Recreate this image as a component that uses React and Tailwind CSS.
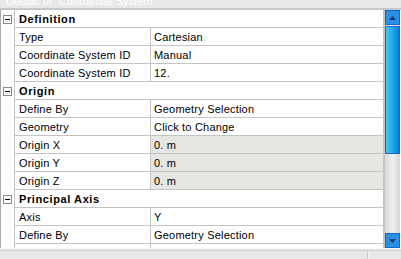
const font = { fontFamily: '"Liberation Sans", Arial, sans-serif' };

const sections = [
  {
    title: "Definition",
    rows: [
      ["Type", "Cartesian"],
      ["Coordinate System ID", "Manual"],
      ["Coordinate System ID", "12."],
    ],
  },
  {
    title: "Origin",
    rows: [
      ["Define By", "Geometry Selection"],
      ["Geometry", "Click to Change"],
      ["Origin X", "0. m", true],
      ["Origin Y", "0. m", true],
      ["Origin Z", "0. m", true],
    ],
  },
  {
    title: "Principal Axis",
    rows: [
      ["Axis", "Y"],
      ["Define By", "Geometry Selection"],
      ["", ""],
    ],
  },
];

const MinusBox = () => (
  <div className="w-[9px] h-[9px] border border-[#8a8a8a] bg-white flex items-center justify-center">
    <div className="w-[5px] h-px bg-black" />
  </div>
);

const HeaderRow = ({ title }) => (
  <div className="flex h-[18px] shrink-0">
    <div className="w-[13px] shrink-0 flex items-center justify-center bg-white">
      <MinusBox />
    </div>
    <div className="flex-1 border-l border-b border-[#c4c4c4] bg-white flex items-center pl-[4px] pt-px text-[11px] font-bold tracking-[0.6px] text-black">
      {title}
    </div>
  </div>
);

const DataRow = ({ label, value, readOnly }) => (
  <div className="flex h-[18px] shrink-0">
    <div className="w-[13px] shrink-0 bg-white" />
    <div className="w-[136px] shrink-0 border-l border-b border-[#c4c4c4] bg-white flex items-center pl-[4px] pt-px text-[11px] tracking-[0.2px] text-black">
      {label}
    </div>
    <div
      className={`flex-1 border-l border-b border-[#c4c4c4] flex items-center pl-[3px] pt-px text-[11px] tracking-[0.2px] text-black ${
        readOnly ? "bg-[#e8e6e2]" : "bg-white"
      }`}
    >
      {value}
    </div>
  </div>
);

const Scrollbar = () => (
  <div className="w-[16px] shrink-0 flex flex-col bg-gradient-to-r from-[#d6d6d6] via-[#efefef] to-[#d6d6d6] border-l border-[#c4c4c4]">
    <div className="h-[15px] shrink-0 bg-[#2b8fe6] border border-[#1467c8] flex items-center justify-center">
      <svg width="7" height="4" viewBox="0 0 7 4">
        <path d="M0 4 L3.5 0 L7 4 Z" fill="#17406e" />
      </svg>
    </div>
    <div className="h-[128px] shrink-0 mt-px bg-gradient-to-r from-[#47c6f2] via-[#22a9ec] to-[#1479dc] border border-[#1467c8]" />
    <div className="flex-1" />
    <div className="h-[15px] shrink-0 bg-[#2b8fe6] border border-[#1467c8] flex items-center justify-center">
      <svg width="7" height="4" viewBox="0 0 7 4">
        <path d="M0 0 L7 0 L3.5 4 Z" fill="#17406e" />
      </svg>
    </div>
  </div>
);

export default function App() {
  return (
    <div
      className="w-[401px] h-[259px] bg-[#e8e8e8] flex flex-col overflow-hidden"
      style={font}
    >
      <div className="h-[9px] shrink-0 overflow-hidden flex items-end pl-[6px] border-b border-[#c8c8c8] bg-[#e8e8e8]">
        <span className="text-[11px] leading-[13px] text-white whitespace-nowrap">
          Details of "Coordinate System"
        </span>
      </div>
      <div className="h-[239px] shrink-0 flex border-t border-[#c4c4c4] bg-white pr-px">
        <div className="flex-1 flex flex-col overflow-hidden border-l border-[#a8a8a8] border-r border-r-[#c4c4c4]">
          {sections.map((s) => (
            <div key={s.title} className="flex flex-col shrink-0">
              <HeaderRow title={s.title} />
              {s.rows.map(([l, v, ro], i) => (
                <DataRow key={i} label={l} value={v} readOnly={ro} />
              ))}
            </div>
          ))}
        </div>
        <Scrollbar />
      </div>
      <div className="h-px shrink-0 bg-[#f6f6f6]" />
      <div className="flex-1 flex border-t border-[#d0d0d0] mt-px">
        <div className="w-[368px] border-r border-[#c8c8c8]" />
        <div className="flex-1 border-l border-[#f4f4f4]" />
      </div>
    </div>
  );
}
